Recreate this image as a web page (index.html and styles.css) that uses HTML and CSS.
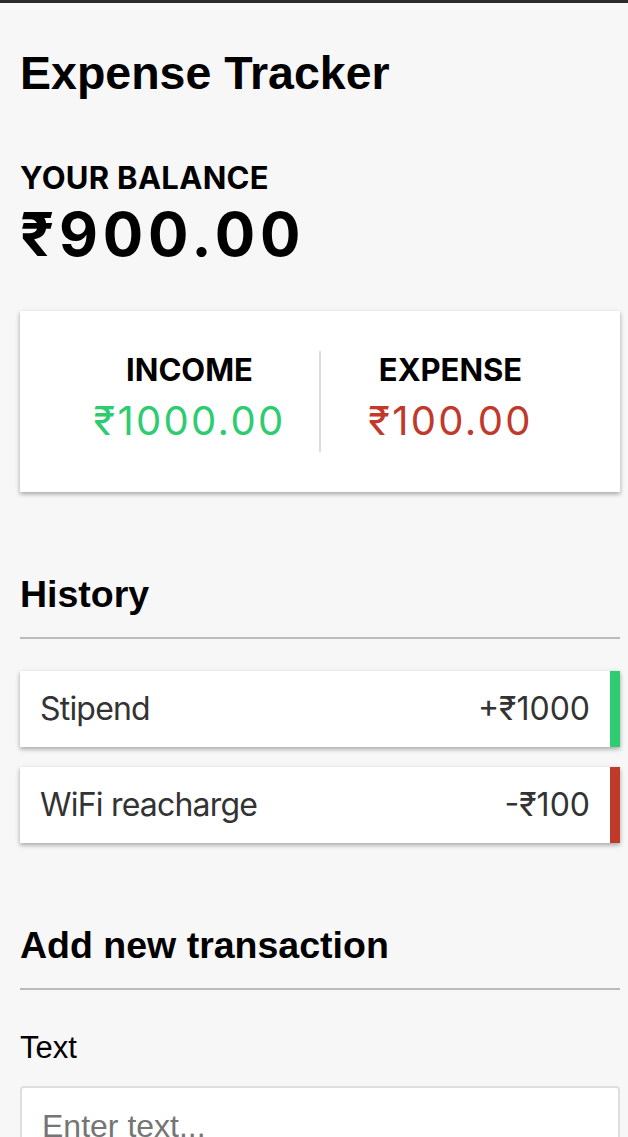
FILE: index.html
```html
<!DOCTYPE html>
<html lang="en">
<head>
<meta charset="UTF-8">
<title>Expense Tracker</title>
<link rel="stylesheet" href="styles.css">
</head>
<body>
<div class="topbar"></div>
<div class="container">
  <h2 class="title">Expense Tracker</h2>
  <h4 class="balance-label">Your Balance</h4>
  <h1 class="balance">₹900.00</h1>
  <div class="inc-exp">
    <div class="inc-exp-col first">
      <h4 class="col-label">Income</h4>
      <p class="money plus">₹1000.00</p>
    </div>
    <div class="inc-exp-col">
      <h4 class="col-label">Expense</h4>
      <p class="money minus">₹100.00</p>
    </div>
  </div>
  <h3 class="section-title">History</h3>
  <ul class="list">
    <li class="item plus"><span class="item-text">Stipend</span><span>+₹1000</span></li>
    <li class="item minus"><span class="item-text">WiFi reacharge</span><span>-₹100</span></li>
  </ul>
  <h3 class="section-title">Add new transaction</h3>
  <form class="form">
    <label class="field-label" for="text">Text</label>
    <input class="field-input" type="text" id="text" placeholder="Enter text...">
  </form>
</div>
</body>
</html>
```
FILE: styles.css
```css
* { box-sizing: border-box; }
html { overflow: hidden; }
body {
  margin: 0;
  background: #f7f7f7;
  font-family: "Liberation Sans", Arial, sans-serif;
  color: #000;
}
.topbar { height: 3px; background: #2b2b2b; }
.container { width: 600px; margin: 0 0 0 20px; }
.title {
  margin: 44px 0 0;
  font-family: "Liberation Sans", Arial, sans-serif;
  font-weight: 700;
  font-size: 46.5px;
  line-height: 52px;
}
.balance-label {
  margin: 61px 0 0;
  font-family: Inter, "Noto Sans", sans-serif;
  font-weight: 700;
  font-size: 31px;
  line-height: 36px;
  letter-spacing: 0.3px;
  text-transform: uppercase;
}
.balance {
  margin: 6px 0 0;
  font-family: Inter, "Noto Sans", sans-serif;
  font-weight: 700;
  font-size: 60px;
  line-height: 64px;
  letter-spacing: 4.8px;
}
.inc-exp {
  margin: 45px 0 0;
  display: flex;
  background: #fff;
  padding: 40px;
  box-shadow: 0 2px 6px rgba(0,0,0,0.12), 0 2px 4px rgba(0,0,0,0.24);
}
.inc-exp-col { flex: 1; text-align: center; }
.inc-exp-col.first { border-right: 2px solid #dedede; }
.col-label {
  margin: 0;
  font-family: Inter, "Noto Sans", sans-serif;
  font-weight: 700;
  font-size: 31px;
  line-height: 38px;
  text-transform: uppercase;
}
.money {
  margin: 10px 0;
  font-family: Inter, "Noto Sans", sans-serif;
  font-size: 40px;
  line-height: 43px;
  letter-spacing: 2.3px;
}
.money.plus { color: #2ecc71; }
.money.minus { color: #c0392b; }
.section-title {
  margin: 80px 0 0;
  font-family: "Liberation Sans", Arial, sans-serif;
  font-weight: 700;
  font-size: 37.5px;
  line-height: 45px;
  padding-bottom: 20px;
  border-bottom: 2px solid #bbb;
}
.list {
  list-style: none;
  padding: 0;
  margin: 32px 0 0;
  display: flex;
  flex-direction: column;
  gap: 20px;
}
.item {
  display: flex;
  justify-content: space-between;
  background: #fff;
  color: #333;
  padding: 20px;
  font-family: Inter, "Noto Sans", sans-serif;
  font-size: 32px;
  line-height: 36px;
  box-shadow: 0 2px 6px rgba(0,0,0,0.12), 0 2px 4px rgba(0,0,0,0.24);
}
.item-text { letter-spacing: -0.8px; }
.item.plus { border-right: 10px solid #2ecc71; }
.item.minus { border-right: 10px solid #c0392b; }
.form { margin: 0; }
.field-label {
  display: block;
  margin: 40px 0 20px;
  font-size: 31px;
  line-height: 36px;
}
.field-input {
  display: block;
  width: 100%;
  border: 2px solid #dedede;
  border-radius: 4px;
  padding: 20px;
  font-family: "Liberation Sans", Arial, sans-serif;
  font-size: 32px;
  background: #fff;
}
.field-input::placeholder { color: #757575; }
```
